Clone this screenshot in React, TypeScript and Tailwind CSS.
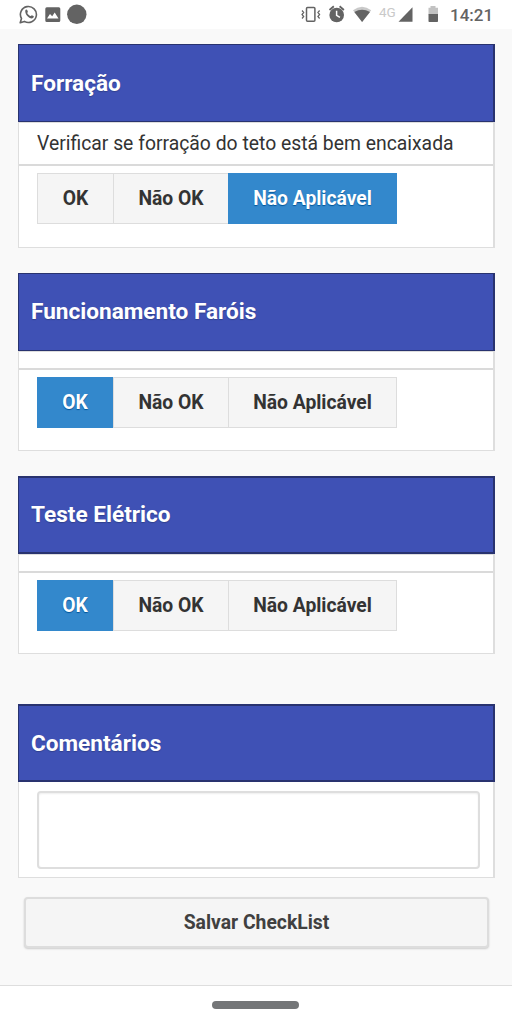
import { useState } from "react";

function StatusBar() {
  return (
    <header className="flex h-[29px] w-full shrink-0 items-start bg-white pl-[19px] pr-5 text-[#636363]">
      <svg width="70" height="28" viewBox="0 0 70 28" fill="none">
        <path d="M1.2 22.7 2.5 18.5A8 8 0 1 1 5.4 21.4Z" stroke="currentColor" strokeWidth="1.6" strokeLinejoin="round" />
        <path d="M6.4 10c.6-.8 1.5-.7 1.8 0l.7 1.7c.1.4-.7 1.1-.7 1.4.7 1.5 1.8 2.4 3.2 3 .4.1 1-.9 1.4-.9l1.8.9c.4.3.1 1.5-.6 2-2.8 1.7-8.8-3.5-7.6-8.1Z" fill="currentColor" />
        <path fillRule="evenodd" d="M27.8 7.2h12a1.5 1.5 0 0 1 1.5 1.5v11.8a1.5 1.5 0 0 1-1.5 1.5h-12a1.5 1.5 0 0 1-1.5-1.5V8.7a1.5 1.5 0 0 1 1.5-1.5ZM28 18.600h11.500l-3.800-6-2.500 3.600-2.200-2.200Z" fill="currentColor" />
        <circle cx="57.800" cy="14.300" r="9.700" fill="currentColor" />
      </svg>
      <svg className="ml-auto shrink-0" width="77" height="28" viewBox="301 0 77 28" fill="none">
        <rect x="306.500" y="7.600" width="8.400" height="13.600" rx="1" stroke="currentColor" strokeWidth="1.500" />
        <path d="m302 10.500 1.700 2-1.700 2 1.700 2-1.700 2M319.600 10.500l-1.700 2 1.700 2-1.700 2 1.700 2" stroke="currentColor" strokeWidth="1.200" />
        <circle cx="336.700" cy="15" r="7.300" fill="currentColor" />
        <path d="m329.500 10 4.300-3.700M343.900 10l-4.300-3.700" stroke="currentColor" strokeWidth="1.800" />
        <path d="M336.600 10.800v4.600l3.300 2" stroke="white" strokeWidth="1.500" />
        <path d="M353 10.300Q362 3.300 371.200 10.300L362.100 22Z" fill="#c9c9c9" />
        <path d="M354.300 12.100Q362 7.500 370 12.100L362.100 22Z" fill="currentColor" />
      </svg>
      <span className="ml-[1px] mt-[4px] w-[19px] whitespace-nowrap text-[13.5px] leading-4 text-[#c9c9c9]">4G</span>
      <svg className="shrink-0" width="46" height="28" viewBox="398 0 46 28">
        <path d="M398.500 21.700 412.500 7.300v14.400Z" fill="currentColor" />
        <path d="M428.500 7.800h2V6h5v1.800h2.500v6.700h-9.500Z" fill="#c2c2c2" />
        <path d="M428.500 14h9.500v7.200a.8.800 0 0 1-.8.800h-7.900a.8.800 0 0 1-.8-.8Z" fill="currentColor" />
      </svg>
      <time className="ml-[6px] mt-[4px] w-[42px] whitespace-nowrap text-[17px] font-medium leading-[22px]">14:21</time>
    </header>
  );
}

function SectionTitle({ children, className }: { children: string; className: string }) {
  return (
    <h2 className={`flex shrink-0 items-center border border-r-2 border-[#29336f] bg-[#3f51b5] pl-3 text-[22.6px] font-bold leading-7 text-white [text-shadow:0_1px_1px_#30408d] ${className}`}>
      {children}
    </h2>
  );
}

const choices = [
  { label: "OK", width: "w-[76px]" },
  { label: "Não OK", width: "w-[115px]" },
  { label: "Não Aplicável", width: "w-[169px]" },
];

type CheckSectionProps = {
  title: string;
  description?: string;
  initial: number;
  className: string;
  titleClassName: string;
};

function CheckSection({ title, description, initial, className, titleClassName }: CheckSectionProps) {
  const [selected, setSelected] = useState(initial);
  return (
    <section className={`flex shrink-0 flex-col ${className}`}>
      <SectionTitle className={titleClassName}>{title}</SectionTitle>
      <div className="flex flex-1 flex-col border border-r-2 border-[#dedede] bg-white">
        <p className={`shrink-0 border-b-2 border-[#dadada] pl-[18px] text-[19.35px] leading-[41px] text-[#333] ${description ? "h-[43px]" : "h-[18px]"}`}>
          {description}
        </p>
        <div className={`ml-[18px] mt-[7px] flex h-[51px] ${description ? "[&>button]:pt-[2px]" : "[&>button]:pt-px"}`}>
          {choices.map(({ label, width }, index) => (
            <button
              key={label}
              onClick={() => setSelected(index)}
              className={`h-full whitespace-nowrap text-[19.3px] font-bold ${width} ${
                index === selected
                  ? "bg-[#3388cc] text-white [text-shadow:0_1px_1px_#005599]"
                  : "border border-[#dddddd] bg-[#f5f5f5] text-[#333] [text-shadow:0_1px_0_#f3f3f3] not-last:border-r-0"
              }`}
            >
              {label}
            </button>
          ))}
        </div>
      </div>
    </section>
  );
}

export default function App() {
  return (
    <div className="flex h-[1024px] w-[512px] flex-col overflow-hidden bg-[#f9f9f9] [font-family:Roboto,'Liberation_Sans',sans-serif]">
      <StatusBar />
      <main className="flex min-h-0 flex-1 flex-col pl-[18px] pr-[17px] pt-[15px]">
        <CheckSection title="Forração" description="Verificar se forração do teto está bem encaixada" initial={2} className="h-[204px]" titleClassName="h-[78px] pt-px" />
        <CheckSection title="Funcionamento Faróis" initial={0} className="mt-[25px] h-[178px]" titleClassName="h-[78px]" />
        <CheckSection title="Teste Elétrico" initial={0} className="mt-[25px] h-[178px]" titleClassName="h-[78px] border-t-2 border-b-2" />
        <section className="mt-[50px] shrink-0">
          <SectionTitle className="h-[78px] border-y-2 pt-px">Comentários</SectionTitle>
          <div className="h-[96px] border border-r-2 border-t-0 border-[#dedede] bg-white pl-[18px] pr-[13px] pt-[9px]">
            <textarea aria-label="Comentários" className="block h-[78px] w-full resize-none rounded-[4px] border-2 border-[#dedede] bg-white shadow-[inset_0_1px_2px_#eeeeee] outline-none" />
          </div>
        </section>
        <button className="mx-[6px] mt-[19px] h-[51px] shrink-0 rounded-[4px] border-2 border-[#dddddd] bg-[#f5f5f5] pt-px text-[19.35px] font-bold text-[#404040] shadow-[0_1px_2px_rgba(0,0,0,0.18)]">
          Salvar CheckList
        </button>
      </main>
      <footer className="flex h-[39px] shrink-0 justify-center border-t border-[#dedede] bg-white pr-px pt-[15px]">
        <div className="h-[8px] w-[87px] rounded-full bg-[#747678]" />
      </footer>
    </div>
  );
}
